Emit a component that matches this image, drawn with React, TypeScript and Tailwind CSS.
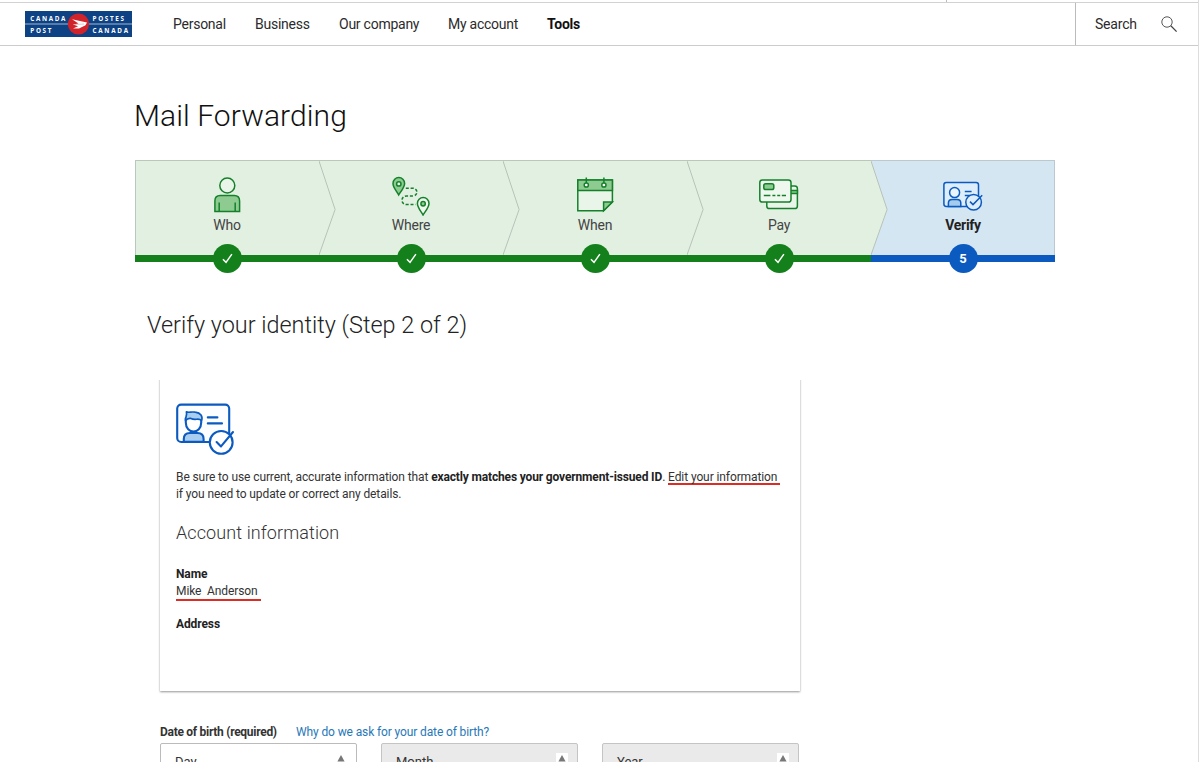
import type { ReactNode } from "react";

const NAV_ITEMS = [
  { label: "Personal", className: "w-[82px]" },
  { label: "Business", className: "w-[84px]" },
  { label: "Our company", className: "w-[109px]" },
  { label: "My account", className: "w-[99px]" },
  { label: "Tools", className: "font-bold text-[#111]" },
];

function Logo() {
  return (
    <svg width="108" height="26" viewBox="0 0 108 26" aria-label="Canada Post">
      <rect width="107" height="26" fill="#0d4284" />
      <path d="M0 13H107" stroke="#c9d6e6" strokeWidth="0.8" />
      <circle cx="53.5" cy="13" r="10.6" fill="#d1232a" />
      <path
        d="M47 8.2L62 11.6L60.5 14.2L54 17.6L48 17.4L53 15.2L48 13.6L53.5 12.4Z"
        fill="#fff"
      />
      <path d="M48.5 13.6L59 13" stroke="#e8949a" strokeWidth="0.6" />
      <g
        fill="#fff"
        fontFamily="'Open Sans', sans-serif"
        fontSize="6.3"
        fontWeight="700"
      >
        <text x="5.3" y="9.6" textLength="35">CANADA</text>
        <text x="5.3" y="21.6" textLength="21">POST</text>
        <text x="67.5" y="9.6" textLength="31.5">POSTES</text>
        <text x="67.5" y="21.6" textLength="35.5">CANADA</text>
      </g>
    </svg>
  );
}

function Header() {
  return (
    <header>
      <div className="flex h-[3px] border-b border-[#d2d2d2]">
        <div className="w-[947px] border-r border-[#bbb]" />
      </div>
      <div className="flex h-[43px] items-center border-b border-[#ccc] pl-[25px] text-[#2b2b2b]">
        <Logo />
        <nav className="ml-10 flex flex-1 text-[14px] leading-5 tracking-[-0.25px]">
          {NAV_ITEMS.map((item) => (
            <a key={item.label} href="#" className={item.className}>
              {item.label}
            </a>
          ))}
        </nav>
        <div className="flex h-full w-[123px] items-center border-l border-[#bbb] pl-[19px]">
          <span className="w-[66px] text-[14px] leading-5 tracking-[-0.2px]">Search</span>
          <svg width="17" height="17" viewBox="0 0 17 17" fill="none" stroke="#444" strokeWidth="0.9">
            <circle cx="6" cy="6" r="5.2" />
            <path d="M9.8 9.8L15.6 15.6" strokeWidth="1.3" />
          </svg>
        </div>
      </div>
    </header>
  );
}

function WhoIcon() {
  return (
    <svg width="42" height="42" viewBox="0 0 42 42" fill="none" stroke="#15802a" strokeWidth="1.5">
      <circle cx="21.3" cy="11.5" r="7.5" fill="#eaf5ea" />
      <path d="M8.9 37.4V27Q8.9 21.6 14.2 21.6H28.2Q33.6 21.6 33.6 27V37.4Z" fill="#8dcb91" />
      <path d="M13.2 37V28.5M29.2 37V28.5" />
    </svg>
  );
}

function WhereIcon() {
  return (
    <svg width="42" height="42" viewBox="0 0 42 42" fill="none" stroke="#15802a" strokeWidth="1.5">
      <path d="M8.7 21C7 17.6 3 13.4 3 9.4A5.8 5.8 0 0 1 14.6 9.4C14.6 13.4 10.6 17.6 8.7 21Z" fill="#8dcb91" />
      <circle cx="8.8" cy="9.9" r="2.2" fill="#e2f0e2" />
      <path d="M33 41C31.2 37.6 27.4 33.4 27.4 29.4A5.8 5.8 0 0 1 39 29.4C39 33.4 35 37.6 33 41Z" fill="#eef8ee" />
      <circle cx="33.1" cy="29.8" r="2.2" fill="#8dcb91" />
      <path
        d="M15.8 14.2H22.5C28.4 14.2 28.4 22 22.5 22H16.6C10.4 22 10.4 30.6 16.6 30.6H25.6"
        strokeDasharray="3 1.8"
      />
    </svg>
  );
}

function WhenIcon() {
  return (
    <svg width="42" height="42" viewBox="0 0 42 42" fill="none" stroke="#15802a" strokeWidth="1.5">
      <path d="M3.8 6H38.4V28L29.6 36.8H3.8Z" fill="#e9f5e9" />
      <path d="M3.8 6H38.4V16.6H3.8Z" fill="#8dcb91" />
      <path d="M29.6 36.8V28H38.4Z" fill="#8dcb91" />
      <path d="M12.3 3.4V9M29.9 3.4V9" />
      <circle cx="12.3" cy="11" r="2.1" fill="#fff" />
      <circle cx="29.9" cy="11" r="2.1" fill="#fff" />
    </svg>
  );
}

function PayIcon() {
  return (
    <svg width="42" height="42" viewBox="0 0 42 42" fill="none" stroke="#15802a" strokeWidth="1.5">
      <rect x="8.8" y="12" width="30.6" height="22.6" rx="2.6" fill="#e9f5e9" />
      <path d="M32 16.6H39.4V19.6H32Z" fill="#8dcb91" />
      <rect x="1.8" y="6" width="31.2" height="22" rx="2.6" fill="#eef8ee" />
      <rect x="5.8" y="9.8" width="10" height="5.8" rx="1.8" fill="#8dcb91" />
      <path d="M5.8 21.4H12.4M14.4 21.4H17.4M19.2 21.4H22.2M23.8 21.4H28" />
    </svg>
  );
}

function VerifyIcon() {
  return (
    <svg width="42" height="42" viewBox="0 0 42 42" fill="none" stroke="#0b5ac0" strokeWidth="1.5">
      <rect x="1.9" y="8.4" width="34.6" height="24" rx="2.4" fill="#deedfa" />
      <path d="M6.4 32.4V29Q6.4 25.4 10.2 25.4H15Q18.8 25.4 18.8 29V32.4Z" fill="#a5cbed" />
      <circle cx="12.6" cy="18.6" r="5" fill="#e9f3fb" />
      <path d="M22.8 17.4H29.6M22.8 21.4H28.2" />
      <circle cx="31.6" cy="28.2" r="7.8" fill="#deedfa" />
      <path d="M28 27.6L31 30.6L40.2 21.2" />
    </svg>
  );
}

type Step = { label: string; icon: ReactNode; active?: boolean };

const STEPS: Step[] = [
  { label: "Who", icon: <WhoIcon /> },
  { label: "Where", icon: <WhereIcon /> },
  { label: "When", icon: <WhenIcon /> },
  { label: "Pay", icon: <PayIcon /> },
  { label: "Verify", icon: <VerifyIcon />, active: true },
];

function StepItem({ step, index }: { step: Step; index: number }) {
  return (
    <li
      className={
        step.active
          ? "relative flex h-[102px] flex-col items-center border-t border-b-[7px] border-t-[#bcc8ce] border-b-[#0b5ac0] bg-[#d5e6f3] shadow-[inset_-1px_0_0_#bcc8ce]"
          : index === 0
            ? "relative flex h-[102px] flex-col items-center border-t border-b-[7px] border-t-[#b9c8b9] border-b-[#14801c] bg-[#e2f0e2] shadow-[inset_1px_0_0_#b9c8b9]"
            : "relative flex h-[102px] flex-col items-center border-t border-b-[7px] border-t-[#b9c8b9] border-b-[#14801c] bg-[#e2f0e2]"
      }
    >
      {index > 0 && (
        <svg className="absolute top-0 left-0" width="18" height="94" viewBox="0 0 18 94">
          <path d="M0 0L16.1 48.5L0 94Z" fill="#e2f0e2" />
          <path d="M0 0L16.1 48.5L0 94" fill="none" stroke="#b7c2b9" />
        </svg>
      )}
      <div className="mt-[13px]">{step.icon}</div>
      <span
        className={
          step.active
            ? "-mt-px text-[14px] leading-5 font-bold tracking-[-0.3px] text-[#222]"
            : "-mt-px text-[14px] leading-5 tracking-[-0.25px] text-[#444]"
        }
      >
        {step.label}
      </span>
      <span
        className={
          step.active
            ? "absolute top-[83px] left-[77.5px] flex size-[29px] items-center justify-center rounded-full bg-[#0b5ac0] text-[13px] font-bold text-white"
            : "absolute top-[83px] left-[77.5px] flex size-[29px] items-center justify-center rounded-full bg-[#14801c]"
        }
      >
        {step.active ? (
          index + 1
        ) : (
          <svg width="11" height="11" viewBox="0 0 12 12" fill="none" stroke="#fff" strokeWidth="1.6">
            <path d="M1 6.8L4.4 10.2L10.8 1.2" />
          </svg>
        )}
      </span>
    </li>
  );
}

function IdCardIcon() {
  return (
    <svg width="60" height="54" viewBox="0 0 60 54" fill="none" stroke="#0b5ac0" strokeWidth="2.1" strokeLinecap="round" strokeLinejoin="round">
      <rect x="1.2" y="2.6" width="52" height="37.4" rx="4" fill="#fbfdff" />
      <path d="M7.8 39.8V37Q7.8 31 14 31H21.4Q27.6 31 27.6 37V39.8Z" fill="#a9cdee" />
      <path d="M9.8 16V20.5C9.8 32.4 25.2 32.4 25.2 20.5V16" fill="#fff" />
      <path d="M9.6 18.6C9.2 15 11.4 13.4 10.4 9.8C13 11 15.2 9.4 19.2 10.2C24.6 11 27.2 14 25.4 18.6C23 15.4 19.4 18.8 14.8 16.4C12.4 16 11 16.8 9.6 18.6Z" fill="#a9cdee" strokeWidth="1.7" />
      <path d="M31.8 15.4H41.4M31.8 21.4H46" />
      <circle cx="45.2" cy="40.4" r="11.4" fill="#fff" />
      <path d="M40.6 40L45 44.4L57 30" />
    </svg>
  );
}

function BirthSelect({ label, enabled }: { label: string; enabled?: boolean }) {
  return (
    <div
      className={
        enabled
          ? "flex h-[38px] w-[197px] justify-between rounded-[2px] border border-[#bbb] bg-white pt-[9px] pr-[9px] pl-[14px]"
          : "flex h-[38px] w-[197px] justify-between rounded-[2px] border border-[#c4c4c4] bg-[#eaeaea] pt-[9px] pr-[9px] pl-[14px]"
      }
    >
      <span className="text-[13px] leading-[18px] text-[#333]">{label}</span>
      <span className="flex h-5 w-3 justify-center bg-white pt-[2px]">
        <svg width="8" height="7" viewBox="0 0 8 7">
          <path d="M4 0L7.6 6.6H0.4Z" fill="#777" />
        </svg>
      </span>
    </div>
  );
}

export default function App() {
  return (
    <div className="h-[762px] w-[1200px] overflow-hidden bg-white font-['Roboto',sans-serif]">
      <div className="h-full w-[1199px] border-r border-[#ddd]">
        <Header />
        <main className="pl-[135px]">
          <h1 className="-ml-px pt-[50px] text-[30px] leading-10 font-light tracking-[0.08px] text-[#111]">
            Mail Forwarding
          </h1>
          <ol className="mt-[24px] grid w-[920px] grid-cols-5">
            {STEPS.map((step, i) => (
              <StepItem key={step.label} step={step} index={i} />
            ))}
          </ol>
          <h2 className="mt-[47px] ml-[12px] text-[23.4px] leading-8 font-light text-[#222]">
            Verify your identity (Step 2 of 2)
          </h2>
          <section className="mt-[37px] ml-[25px] h-[313px] w-[640px] px-4 pt-6 text-[12px] leading-[17px] tracking-[-0.1px] text-[#333] shadow-[0_1px_2px_rgba(0,0,0,0.42)] [clip-path:inset(2px_-5px_-5px_-5px)]">
            <IdCardIcon />
            <p className="mt-[13px] whitespace-nowrap">
              Be sure to use current, accurate information that{" "}
              <b className="tracking-[-0.15px] text-[#222]">
                exactly matches your government-issued ID
              </b>
              .{" "}
              <span className="inline-flex h-[13px] items-end">
                <a href="#" className="border-b-2 border-[#dc2c23] pr-[3px] leading-[11px]">
                  Edit your information
                </a>
              </span>
              <br />
              if you need to update or correct any details.
            </p>
            <h3 className="mt-[18px] text-[18px] leading-6 font-light tracking-[0.1px] text-[#333]">
              Account information
            </h3>
            <dl className="mt-[21px]">
              <dt className="font-bold text-[#222]">Name</dt>
              <dd className="h-[18px] w-[85px] border-b-2 border-[#dc2c23] whitespace-pre">
                Mike  Anderson
              </dd>
              <dt className="mt-[15px] font-bold text-[#222]">Address</dt>
            </dl>
          </section>
          <div className="mt-[33px] ml-[25px] flex text-[12px] leading-[17px]">
            <span className="w-[136px] font-bold tracking-[-0.28px] text-[#333]">
              Date of birth (required)
            </span>
            <a href="#" className="tracking-[-0.12px] text-[#2878b8]">
              Why do we ask for your date of birth?
            </a>
          </div>
          <div className="mt-[2px] ml-[25px] flex gap-6">
            <BirthSelect label="Day" enabled />
            <BirthSelect label="Month" />
            <BirthSelect label="Year" />
          </div>
        </main>
      </div>
    </div>
  );
}
